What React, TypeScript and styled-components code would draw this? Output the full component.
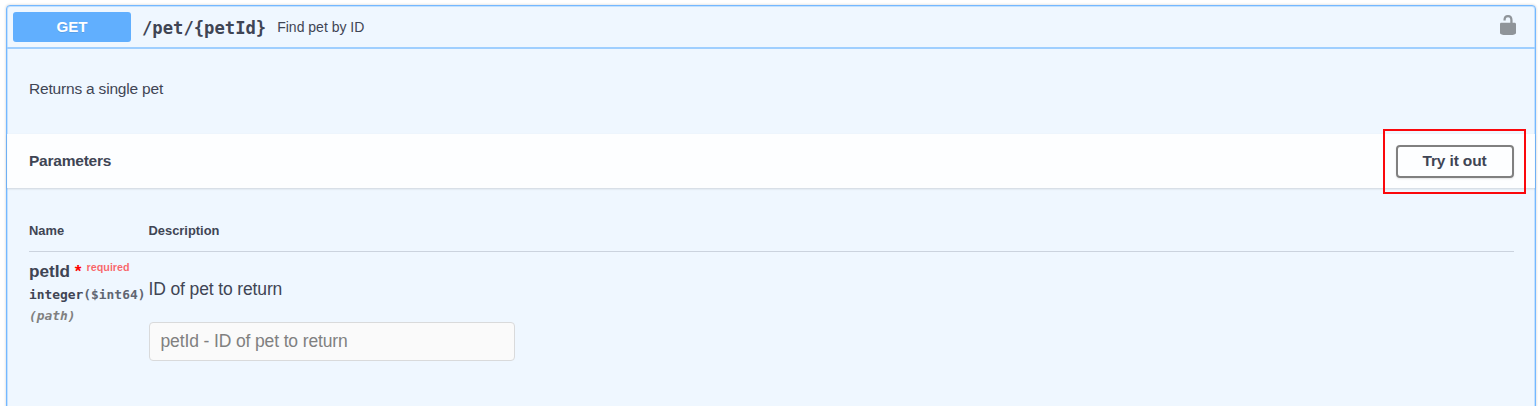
import React from "react";
import styled, { createGlobalStyle } from "styled-components";

const Global = createGlobalStyle`
  * { box-sizing: border-box; }
  body {
    margin: 0;
    background: #fff;
    color: #3f4554;
    font-family: "Liberation Sans", Arial, sans-serif;
    overflow: hidden;
  }
`;

const Page = styled.main`
  height: 406px;
  padding: 5px 2px 0 6px;
  overflow: hidden;
`;

const Operation = styled.section`
  height: 440px;
  border: 1px solid #74b8ff;
  border-radius: 4px;
  background: #eff7ff;
  box-shadow: 0 0 3px rgba(0, 0, 0, 0.19), inset 0 0 0 1px rgba(116, 184, 255, 0.35);
`;

const Summary = styled.header`
  display: flex;
  align-items: center;
  height: 43px;
  padding: 0 19px 0 6px;
  border-bottom: 2px solid #9fcfff;
`;

const Method = styled.span`
  width: 118px;
  height: 30px;
  border-radius: 3px;
  background: #61affe;
  color: #fff;
  font-size: 15.1px;
  font-weight: 700;
  line-height: 30px;
  text-align: center;
  text-shadow: 0 1px 0 rgba(0, 0, 0, 0.1);
`;

const Path = styled.span`
  margin-left: 11px;
  padding-top: 2px;
  font: 700 17.2px/20px "DejaVu Sans Mono", monospace;
`;

const Brief = styled.span`
  flex: 1;
  margin-left: 11px;
  padding-top: 1px;
  font-size: 14px;
`;

const Lock = styled.svg`
  width: 16px;
  height: 20px;
  margin-top: -4px;
`;

const Intro = styled.p`
  margin: 0;
  height: 85px;
  padding: 31px 22px 0;
  font-size: 15.5px;
  letter-spacing: -0.19px;
  line-height: 18px;
`;

const SectionBar = styled.div`
  display: flex;
  align-items: center;
  justify-content: space-between;
  height: 54px;
  padding: 0 9px 0 22px;
  background: rgba(255, 255, 255, 0.85);
  box-shadow: 0 1px 2px rgba(0, 0, 0, 0.14);
`;

const SectionTitle = styled.h4`
  margin: 0;
  font-size: 15.5px;
  letter-spacing: -0.23px;
  line-height: 18px;
`;

const Highlight = styled.div`
  display: flex;
  align-items: center;
  justify-content: center;
  flex: none;
  width: 143px;
  height: 65px;
  border: 2px solid #fb080c;
`;

const TryButton = styled.button`
  width: 118px;
  height: 33px;
  padding: 0;
  border: 2px solid #808080;
  border-radius: 4px;
  background: transparent;
  box-shadow: 0 1px 2px rgba(0, 0, 0, 0.1);
  color: #3f4554;
  font: 700 15.5px/18px "Liberation Sans", Arial, sans-serif;
  letter-spacing: -0.15px;
`;

const Table = styled.div`
  padding: 32px 21px 0 22px;
`;

const Row = styled.div`
  display: grid;
  grid-template-columns: 119.5px 1fr;
`;

const HeadRow = styled(Row)`
  height: 32px;
  border-bottom: 1px solid #cbd3de;
  font-size: 12.9px;
  font-weight: 700;
  line-height: 21px;
`;

const NameCell = styled.div`
  padding-top: 9px;
  white-space: nowrap;
`;

const ParamName = styled.div`
  height: 24px;
  font-size: 17.2px;
  font-weight: 700;
  line-height: 21px;
`;

const Star = styled.span`
  color: #f00;
`;

const Required = styled.span`
  position: relative;
  top: -6px;
  margin-left: 5px;
  color: rgba(255, 0, 0, 0.6);
  font-size: 10.77px;
`;

const ParamType = styled.div`
  height: 20px;
  font: 700 12.9px/20px "DejaVu Sans Mono", monospace;
`;

const Format = styled.span`
  color: #606672;
`;

const Location = styled.div`
  color: #808080;
  font: italic 700 12.9px/21px "DejaVu Sans Mono", monospace;
`;

const DescriptionCell = styled.div`
  padding-top: 27px;
`;

const Description = styled.p`
  margin: 0 0 22px;
  font-size: 17.5px;
  letter-spacing: -0.13px;
  line-height: 21px;
`;

const Field = styled.input`
  display: block;
  width: 366px;
  height: 39px;
  padding: 0 11px;
  border: 1px solid #d9dadb;
  border-radius: 4px;
  background: #fafafa;
  font: 17.5px "Liberation Sans", Arial, sans-serif;
  letter-spacing: -0.13px;

  &::placeholder { color: #808080; }
`;

export default function App() {
  return (
    <Page>
      <Global />
      <Operation>
        <Summary>
          <Method>GET</Method>
          <Path>{"/pet/{petId}"}</Path>
          <Brief>Find pet by ID</Brief>
          <Lock viewBox="3 1 14 18" preserveAspectRatio="none" aria-label="Unlocked">
            <path
              fill="#8f9499"
              d="M15.8 8H14V5.6C14 2.703 12.665 1 10 1 7.334 1 6 2.703 6 5.6V6h2v-.801C8 3.754 8.797 3 10 3c1.203 0 2 .754 2 2.199V8H4c-.553 0-1 .646-1 1.199V17c0 .549.428 1.139.951 1.307l1.197.387C5.672 18.861 6.55 19 7.1 19h5.8c.549 0 1.428-.139 1.951-.307l1.196-.387c.524-.167.953-.757.953-1.306V9.199C17 8.646 16.352 8 15.8 8z"
            />
          </Lock>
        </Summary>
        <Intro>Returns a single pet</Intro>
        <SectionBar>
          <SectionTitle>Parameters</SectionTitle>
          <Highlight>
            <TryButton>Try it out</TryButton>
          </Highlight>
        </SectionBar>
        <Table>
          <HeadRow>
            <span>Name</span>
            <span>Description</span>
          </HeadRow>
          <Row>
            <NameCell>
              <ParamName>
                petId <Star>*</Star>
                <Required>required</Required>
              </ParamName>
              <ParamType>
                integer<Format>($int64)</Format>
              </ParamType>
              <Location>(path)</Location>
            </NameCell>
            <DescriptionCell>
              <Description>ID of pet to return</Description>
              <Field placeholder="petId - ID of pet to return" disabled />
            </DescriptionCell>
          </Row>
        </Table>
      </Operation>
    </Page>
  );
}
